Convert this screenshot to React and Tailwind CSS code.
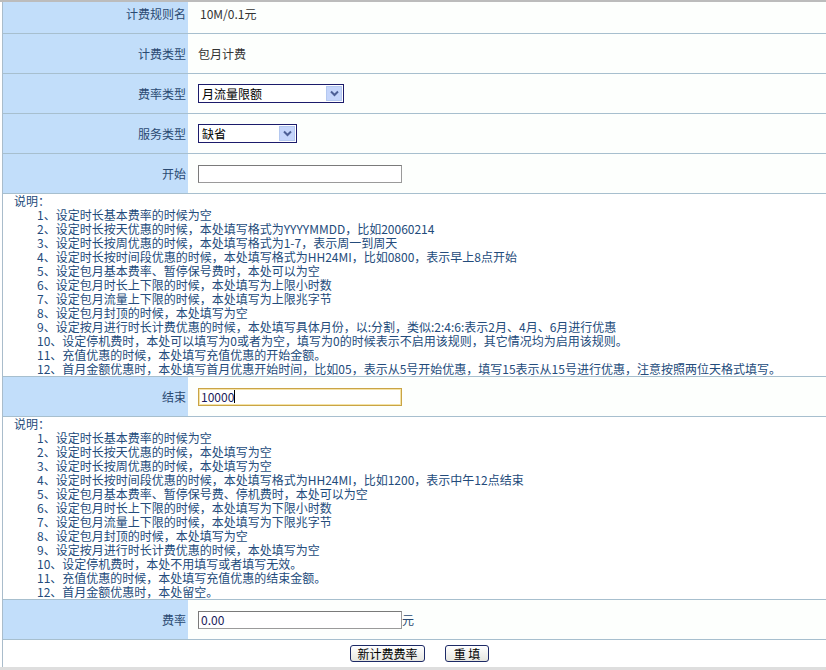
import React from "react";

const FONT = { fontFamily: '"Noto Sans CJK SC", "Noto Sans", sans-serif' };

const desc1 = [
  "1、设定时长基本费率的时候为空",
  "2、设定时长按天优惠的时候，本处填写格式为YYYYMMDD，比如20060214",
  "3、设定时长按周优惠的时候，本处填写格式为1-7，表示周一到周天",
  "4、设定时长按时间段优惠的时候，本处填写格式为HH24MI，比如0800，表示早上8点开始",
  "5、设定包月基本费率、暂停保号费时，本处可以为空",
  "6、设定包月时长上下限的时候，本处填写为上限小时数",
  "7、设定包月流量上下限的时候，本处填写为上限兆字节",
  "8、设定包月封顶的时候，本处填写为空",
  "9、设定按月进行时长计费优惠的时候，本处填写具体月份，以:分割，类似:2:4:6:表示2月、4月、6月进行优惠",
  "10、设定停机费时，本处可以填写为0或者为空，填写为0的时候表示不启用该规则，其它情况均为启用该规则。",
  "11、充值优惠的时候，本处填写充值优惠的开始金额。",
  "12、首月金额优惠时，本处填写首月优惠开始时间，比如05，表示从5号开始优惠，填写15表示从15号进行优惠，注意按照两位天格式填写。",
];

const desc2 = [
  "1、设定时长基本费率的时候为空",
  "2、设定时长按天优惠的时候，本处填写为空",
  "3、设定时长按周优惠的时候，本处填写为空",
  "4、设定时长按时间段优惠的时候，本处填写格式为HH24MI，比如1200，表示中午12点结束",
  "5、设定包月基本费率、暂停保号费、停机费时，本处可以为空",
  "6、设定包月时长上下限的时候，本处填写为下限小时数",
  "7、设定包月流量上下限的时候，本处填写为下限兆字节",
  "8、设定包月封顶的时候，本处填写为空",
  "9、设定按月进行时长计费优惠的时候，本处填写为空",
  "10、设定停机费时，本处不用填写或者填写无效。",
  "11、充值优惠的时候，本处填写充值优惠的结束金额。",
  "12、首月金额优惠时，本处留空。",
];

function Row({ label, children, first }) {
  return (
    <div className="flex border-b border-[#a7bfce] h-[40px]" style={first ? { height: 32 } : undefined}>
      <div
        className={`w-[185px] shrink-0 bg-[#c2defa] flex justify-end pr-[2px] text-[12px] text-[#2a4a72] ${first ? "items-start pt-[3px]" : "items-center"}`}
      >
        {label}
      </div>
      <div className={`flex-1 bg-[#fdfffd] flex pl-[10px] text-[12px] text-[#333] ${first ? "items-start pt-[3px]" : "items-center"}`}>
        {children}
      </div>
    </div>
  );
}

function Select({ value, width }) {
  return (
    <div
      className="h-[19px] border border-[#1b1b6b] bg-white flex items-center justify-between pl-[3px] pr-[1px] text-[12px] text-black"
      style={{ width }}
    >
      <span className="leading-none">{value}</span>
      <div className="w-[16px] h-[15px] bg-[#c5d5fb] border border-[#b4c8f0] flex items-center justify-center">
        <svg width="9" height="7" viewBox="0 0 9 7">
          <path d="M1 1.5 L4.5 5 L8 1.5" fill="none" stroke="#4d5f96" strokeWidth="2" />
        </svg>
      </div>
    </div>
  );
}

function TextInput({ value, focused, caret }) {
  return (
    <div
      className={`w-[204px] h-[18px] flex items-center pl-[2px] text-[12px] text-[#1a1a5a] bg-white ${
        focused
          ? "border border-[#c9a445] shadow-[inset_0_0_0_1px_#f4e3a6]"
          : "border border-[#9a9a9a] border-t-[#7a7a7a] border-l-[#7a7a7a]"
      }`}
    >
      <span className="leading-none">{value}</span>
      {caret && <span className="w-[1px] h-[13px] bg-black" />}
    </div>
  );
}

function Desc({ lines }) {
  return (
    <div className="border-b border-[#a7bfce] bg-white text-[12px] leading-[14px] text-[#234b7b] pl-[11px] whitespace-nowrap">
      <div className="h-[14px]">说明：</div>
      {lines.map((l, i) => (
        <div key={i} className="h-[14px] pl-[23px]">
          {l}
        </div>
      ))}
    </div>
  );
}

function Btn({ children, w }) {
  return (
    <button
      className="h-[17px] rounded-[3px] border border-[#1d2a66] bg-gradient-to-b from-white to-[#e6e6e0] text-[12px] leading-none text-black flex items-center justify-center"
      style={{ width: w }}
    >
      {children}
    </button>
  );
}

export default function App() {
  return (
    <div className="w-[826px] h-[670px] overflow-hidden bg-white" style={FONT}>
      <div className="h-[2px] bg-[#bcbcbc]" />
      <div className="ml-[2px] border-l border-[#a9bccb]">
        <Row label="计费规则名" first>
          <span className="pl-[2px]">10M/0.1元</span>
        </Row>
        <Row label="计费类型">包月计费</Row>
        <Row label="费率类型">
          <Select value="月流量限额" width={146} />
        </Row>
        <Row label="服务类型">
          <Select value="缺省" width={99} />
        </Row>
        <Row label="开始">
          <TextInput value="" />
        </Row>
        <Desc lines={desc1} />
        <Row label="结束">
          <TextInput value="10000" focused caret />
        </Row>
        <Desc lines={desc2} />
        <Row label="费率">
          <TextInput value="0.00" />
          <span className="text-[#2a4a72]">元</span>
        </Row>
        <div className="h-[27px] flex items-center pl-[347px] gap-[20px]">
          <Btn w={75}>新计费费率</Btn>
          <Btn w={44}>重 填</Btn>
        </div>
      </div>
      <div className="h-[10px] bg-[#dedede]" />
    </div>
  );
}
